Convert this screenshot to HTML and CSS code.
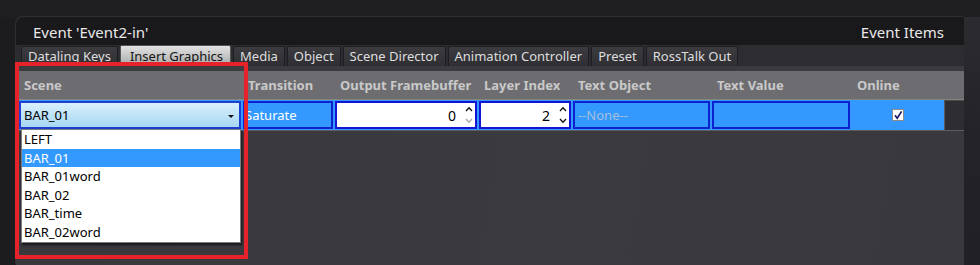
FILE: index.html
```html
<!DOCTYPE html>
<html lang="en">
<head>
    <meta charset="UTF-8">
    <title>Event Items</title>
    <link rel="stylesheet" href="styles.css">
</head>
<body>

<div class="frame">
    <div class="gutter"></div>

    <div class="panel">
        <div class="titlebar">
            <span>Event 'Event2-in'</span>
            <span>Event Items</span>
        </div>

        <nav class="tabs">
            <button>Dataling Keys</button>
            <button class="active">Insert Graphics</button>
            <button>Media</button>
            <button>Object</button>
            <button>Scene Director</button>
            <button>Animation Controller</button>
            <button>Preset</button>
            <button>RossTalk Out</button>
        </nav>

        <div class="band"></div>

        <div class="grid head">
            <div>Scene</div>
            <div>Transition</div>
            <div>Output Framebuffer</div>
            <div>Layer Index</div>
            <div>Text Object</div>
            <div>Text Value</div>
            <div>Online</div>
            <div></div>
        </div>

        <div class="grid row">
            <div class="cell sel">BAR_01<span class="caret"></span></div>
            <div class="cell blue">Saturate</div>
            <div class="cell num">
                <span>0</span>
                <svg class="spin" width="8" height="18" viewBox="0 0 8 18"><path d="M1 5 L4 1.8 L7 5" fill="none" stroke="#111" stroke-width="1.3"/><path d="M1 13 L4 16.2 L7 13" fill="none" stroke="#aaa" stroke-width="1.3"/></svg>
            </div>
            <div class="cell num">
                <span>2</span>
                <svg class="spin" width="8" height="18" viewBox="0 0 8 18"><path d="M1 5 L4 1.8 L7 5" fill="none" stroke="#111" stroke-width="1.3"/><path d="M1 13 L4 16.2 L7 13" fill="none" stroke="#111" stroke-width="1.3"/></svg>
            </div>
            <div class="cell blue none">--None--</div>
            <div class="cell blue"></div>
            <div class="cell online">
                <svg width="12" height="12" viewBox="0 0 12 12"><rect x="0.5" y="0.5" width="11" height="11" fill="#fff" stroke="#8c8c8c"/><path d="M3 6.2 L5.2 9.2 L9.6 2.4" fill="none" stroke="#1b1b6e" stroke-width="1.7"/></svg>
            </div>
            <div class="cell rest"></div>
        </div>

        <!-- open list of the scene dropdown -->
        <ul class="dropdown">
            <li>LEFT</li>
            <li class="picked">BAR_01</li>
            <li>BAR_01word</li>
            <li>BAR_02</li>
            <li>BAR_time</li>
            <li>BAR_02word</li>
        </ul>

        <div class="mark"></div>
    </div>

    <div class="side"></div>
</div>

</body>
</html>
```

FILE: styles.css
```css
body { margin: 0; background: #1f1f22; font-family: "Noto Sans", "DejaVu Sans", sans-serif; font-size: 13px; color: #e0e0e0; overflow: hidden; }
.frame { display: flex; padding-top: 17px; height: 248px; }
.gutter { width: 16px; flex: none; background: #1c1c1f; }
.side { flex: 1; background: linear-gradient(#2c2c30, #242428 45%, #212125); }

.panel { position: relative; width: 948px; flex: none; background: linear-gradient(100deg, #38383d, #3a3a3f 60%, #38383d); border-top-left-radius: 8px; box-shadow: -1px -1px 0 #2f2f33; }
.titlebar { height: 28px; box-sizing: border-box; padding: 3px 20px 0 17px; line-height: 25px; background: #19181b; color: #e9e9e9; font-size: 15px; display: flex; justify-content: space-between; border-top-left-radius: 8px; }

.tabs { height: 21px; display: flex; align-items: flex-end; gap: 2px; padding-left: 5px; background: #2d2d31; }
.tabs button { height: 20px; box-sizing: border-box; padding: 0 6px 0 6px; border: 1px solid #1e1e22; border-bottom: none; background: linear-gradient(#3b3b40, #2f2f33); color: #dedede; font: inherit; line-height: 19px; overflow: hidden; white-space: nowrap; border-radius: 2px 2px 0 0; }
.tabs button.active { height: 21px; padding: 0 7px 0 9px; background: linear-gradient(#e2e2e2, #b9b9b9 70%, #a8a8a8); color: #141414; border-color: #555; line-height: 21px; }

.band { height: 5px; background: #3b3b3f; }

.grid { display: grid; grid-template-columns: 224px 92px 144px 94px 139px 140px 93px 20px; margin-left: 2px; width: 946px; }
.head { height: 28px; background: #6d6d71; color: #c9c9c9; font-weight: bold; line-height: 28px; border-bottom: 1px solid #85857a; }
.head div { padding-left: 6px; white-space: nowrap; overflow: hidden; }

.row { height: 30px; background: #3399ff; border-bottom: 1px solid #5c5c60; }
.cell { margin: 1px; box-sizing: border-box; display: flex; align-items: center; white-space: nowrap; overflow: hidden; }
.sel { border: 2px solid #1d3fcf; background: linear-gradient(#d9f0fc, #bfe3f7 50%, #a7d7f2); color: #000; padding: 0 5px 0 3px; justify-content: space-between; }
.caret { width: 0; height: 0; border-left: 3px solid transparent; border-right: 3px solid transparent; border-top: 3px solid #111; margin-top: 2px; }
.blue { border: 2px solid #0d22cf; background: #3399ff; color: #fff; }
.none { padding-left: 3px; color: #a6bfdc; }
.num { border: 2px solid #1414d6; background: #fff; color: #000; justify-content: flex-end; gap: 9px; padding-right: 2px; font-size: 14px; }
.online { justify-content: center; }
.rest { margin: 0; background: #2e2e32; border-left: 1px solid #5a5a5e; border-top: 1px solid #4a4a4e; }

.dropdown { position: absolute; left: 5px; top: 112px; width: 218px; margin: 0; padding: 0; list-style: none; background: #fff; border: 1px solid #7c7c7c; box-shadow: 1px 2px 2px rgba(0, 0, 0, 0.6); color: #000; }
.dropdown li { height: 18.6px; line-height: 18.6px; padding-left: 2px; }
.dropdown li.picked { background: #3399ff; color: #fff; }

.mark { position: absolute; left: -1px; top: 45px; width: 233px; height: 197px; box-sizing: border-box; border: 4px solid #e6222a; pointer-events: none; }
```
